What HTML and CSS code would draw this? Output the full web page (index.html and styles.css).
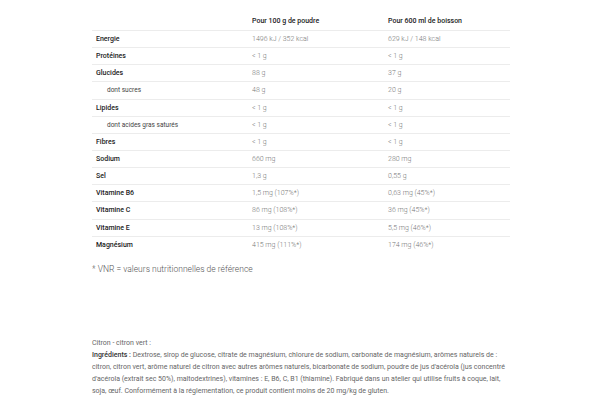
FILE: index.html
```html
<!DOCTYPE html>
<html lang="fr">
<head>
<meta charset="utf-8">
<link rel="stylesheet" href="styles.css">
</head>
<body>
<div class="page">
  <table class="nutri">
    <thead>
      <tr><th></th><th>Pour 100 g de poudre</th><th>Pour 600 ml de boisson</th></tr>
    </thead>
    <tbody>
      <tr><td class="lbl">Energie</td><td>1496 kJ / 352 kcal</td><td>629 kJ / 148 kcal</td></tr>
      <tr><td class="lbl">Protéines</td><td>&lt; 1 g</td><td>&lt; 1 g</td></tr>
      <tr><td class="lbl">Glucides</td><td>88 g</td><td>37 g</td></tr>
      <tr><td class="sub">dont sucres</td><td>48 g</td><td>20 g</td></tr>
      <tr><td class="lbl">Lipides</td><td>&lt; 1 g</td><td>&lt; 1 g</td></tr>
      <tr><td class="sub">dont acides gras saturés</td><td>&lt; 1 g</td><td>&lt; 1 g</td></tr>
      <tr><td class="lbl">Fibres</td><td>&lt; 1 g</td><td>&lt; 1 g</td></tr>
      <tr><td class="lbl">Sodium</td><td>660 mg</td><td>280 mg</td></tr>
      <tr><td class="lbl">Sel</td><td>1,3 g</td><td>0,55 g</td></tr>
      <tr><td class="lbl">Vitamine B6</td><td>1,5 mg (107%*)</td><td>0,63 mg (45%*)</td></tr>
      <tr><td class="lbl">Vitamine C</td><td>86 mg (108%*)</td><td>36 mg (45%*)</td></tr>
      <tr><td class="lbl">Vitamine E</td><td>13 mg (108%*)</td><td>5,5 mg (46%*)</td></tr>
      <tr><td class="lbl">Magnésium</td><td>415 mg (111%*)</td><td>174 mg (46%*)</td></tr>
    </tbody>
  </table>
  <p class="note">* VNR = valeurs nutritionnelles de référence</p>
  <div class="ingr">
    <p>Citron - citron vert :</p>
    <p><strong>Ingrédients :</strong> Dextrose, sirop de glucose, citrate de magnésium, chlorure de sodium, carbonate de magnésium, arômes naturels de : citron, citron vert, arôme naturel de citron avec autres arômes naturels, bicarbonate de sodium, poudre de jus d'acérola (jus concentré d'acérola (extrait sec 50%), maltodextrines), vitamines : E, B6, C, B1 (thiamine). Fabriqué dans un atelier qui utilise fruits à coque, lait, soja, œuf. Conformément à la réglementation, ce produit contient moins de 20 mg/kg de gluten.</p>
  </div>
</div>
</body>
</html>
```
FILE: styles.css
```css
html, body {
  margin: 0;
  padding: 0;
  background: #fff;
}
body {
  font-family: Roboto, "Liberation Sans", sans-serif;
  color: #555;
}
.page {
  padding: 11px 0 0 92px;
  width: 418px;
}
.nutri {
  width: 418px;
  border-collapse: collapse;
  table-layout: fixed;
  font-size: 7px;
}
.nutri th:nth-child(1) { width: 148px; }
.nutri th:nth-child(2) { width: 128px; }
.nutri th {
  text-align: left;
  font-weight: 500;
  color: #222;
  height: 19px;
  padding: 0 4px;
  border-bottom: 1px solid #ececec;
}
.nutri td {
  height: 16.15px;
  padding: 0 4px;
  border-bottom: 1px solid #ececec;
  font-weight: 300;
  color: #777;
}
.nutri tr:last-child td { border-bottom: none; }
.nutri td.lbl {
  font-weight: 500;
  color: #222;
}
.nutri td.sub {
  padding-left: 15px;
  font-weight: 400;
  color: #444;
  font-size: 6.5px;
}
.note {
  margin: 11px 0 0;
  font-size: 8.5px;
  font-weight: 300;
  color: #555;
}
.ingr {
  margin-top: 63px;
  width: 420px;
  font-size: 7px;
  line-height: 12px;
  color: #666;
  font-weight: 400;
}
.ingr p { margin: 0; }
.ingr strong { font-weight: 500; color: #333; }
```
